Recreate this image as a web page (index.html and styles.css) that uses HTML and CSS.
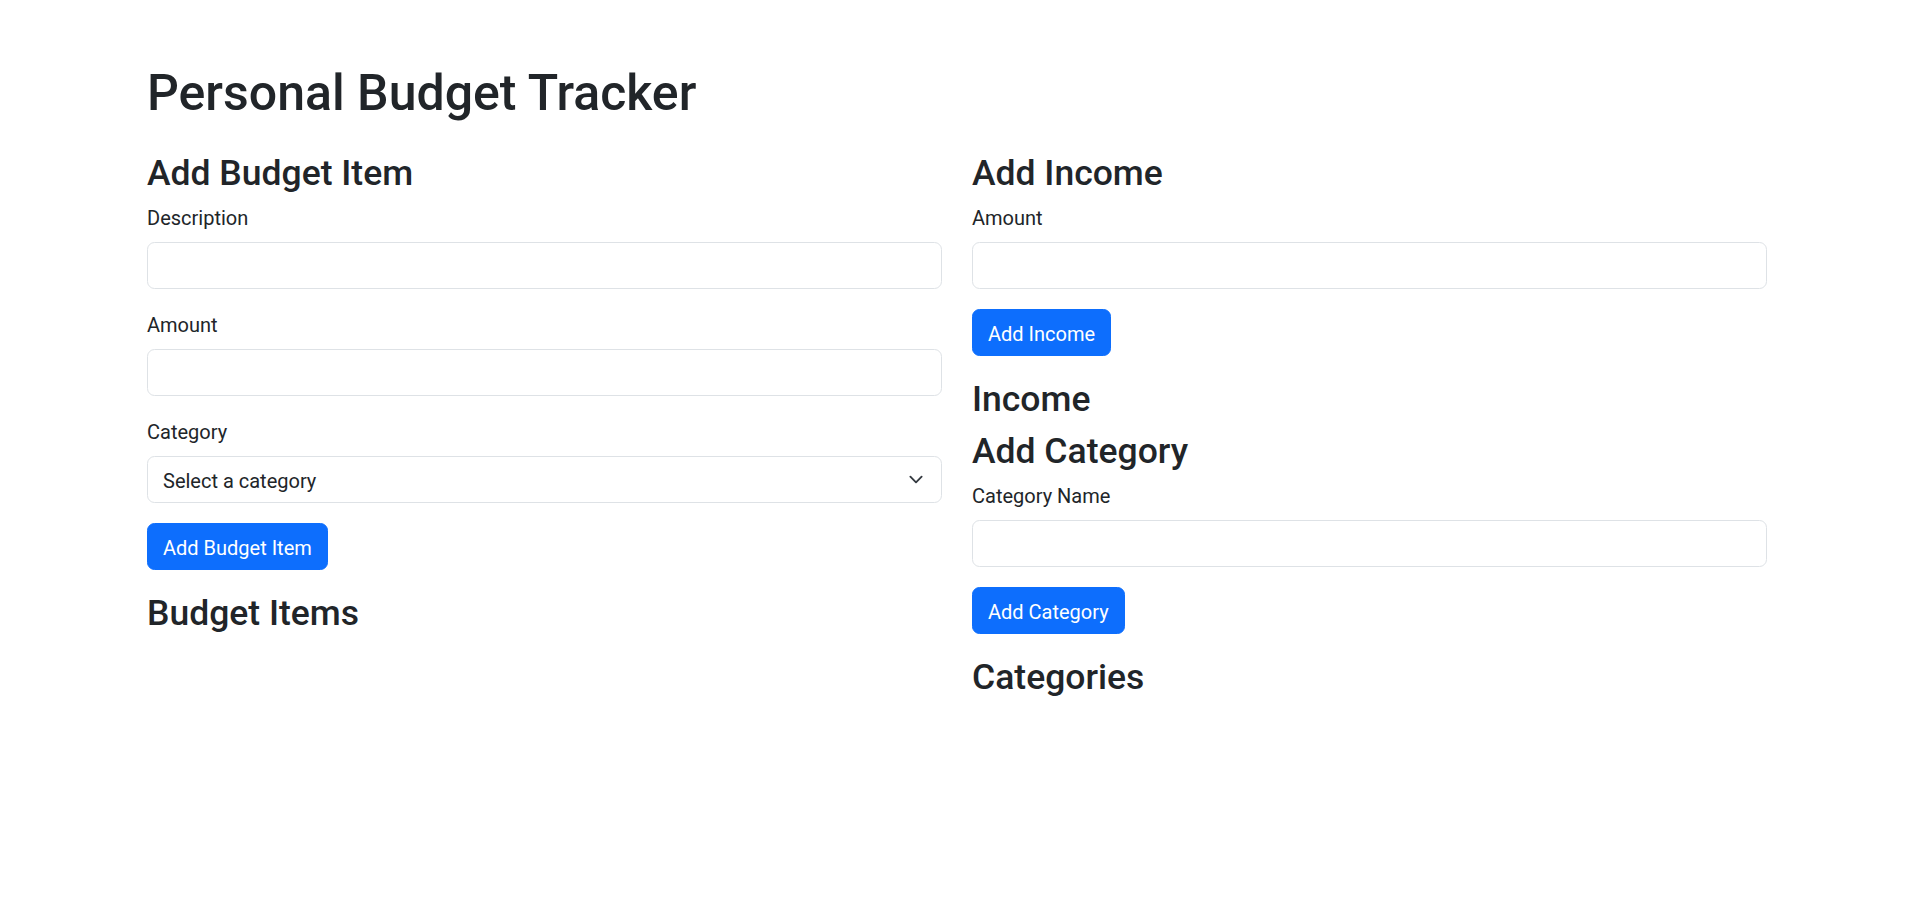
FILE: index.html
```html
<!DOCTYPE html>
<html lang="en">
<head>
<meta charset="utf-8">
<title>Personal Budget Tracker</title>
<link rel="stylesheet" href="styles.css">
</head>
<body>
<div class="container">
  <h1 class="title">Personal Budget Tracker</h1>
  <div class="columns">
    <section class="column">
      <h3 class="heading">Add Budget Item</h3>
      <form class="form">
        <div class="field">
          <label class="label" for="description">Description</label>
          <input class="control" id="description" type="text">
        </div>
        <div class="field">
          <label class="label" for="amount">Amount</label>
          <input class="control" id="amount" type="number">
        </div>
        <div class="field">
          <label class="label" for="category">Category</label>
          <div class="select-wrap">
            <select class="control select" id="category">
              <option value="">Select a category</option>
            </select>
            <svg class="chevron" width="20" height="15" viewBox="0 0 16 16" aria-hidden="true"><path d="m2 5 6 6 6-6" fill="none" stroke="#343a40" stroke-width="2" stroke-linecap="round" stroke-linejoin="round"/></svg>
          </div>
        </div>
        <button class="btn" type="button">Add Budget Item</button>
      </form>
      <h3 class="heading">Budget Items</h3>
      <ul class="list"></ul>
    </section>
    <section class="column">
      <h3 class="heading">Add Income</h3>
      <form class="form">
        <div class="field">
          <label class="label" for="income-amount">Amount</label>
          <input class="control" id="income-amount" type="number">
        </div>
        <button class="btn" type="button">Add Income</button>
      </form>
      <h3 class="heading">Income</h3>
      <div class="list"></div>
      <h3 class="heading">Add Category</h3>
      <form class="form">
        <div class="field">
          <label class="label" for="category-name">Category Name</label>
          <input class="control" id="category-name" type="text">
        </div>
        <button class="btn" type="button">Add Category</button>
      </form>
      <h3 class="heading">Categories</h3>
      <ul class="list"></ul>
    </section>
  </div>
</div>
</body>
</html>
```
FILE: styles.css
```css
* { box-sizing: border-box; }

body {
  margin: 0;
  padding-right: 3px;
  background: #fff;
  color: #212529;
  font-family: Roboto, "Liberation Sans", sans-serif;
  font-size: 20px;
  line-height: 30px;
}

.container {
  width: 1650px;
  margin: 60px auto 0;
  padding: 0 15px;
}

.title {
  margin: 0 0 27px;
  padding-top: 3px;
  font-size: 50px;
  line-height: 60px;
  font-weight: 500;
}

.columns {
  display: grid;
  grid-template-columns: 1fr 1fr;
  column-gap: 30px;
}

.column { min-width: 0; }

.heading {
  margin: 0 0 8px;
  padding-top: 2px;
  font-size: 35.5px;
  line-height: 42px;
  font-weight: 500;
}

.form { margin: 0 0 20px; }

.field { margin-bottom: 20px; }

.label {
  display: inline-block;
  margin-bottom: 9px;
  padding-top: 1px;
}

.control {
  display: block;
  width: 100%;
  margin: 0;
  padding: 8.5px 15px 6.5px;
  font: inherit;
  line-height: 30px;
  color: #212529;
  background: #fff;
  border: 1px solid #dee2e6;
  border-radius: 7.5px;
  outline: none;
  appearance: none;
  -webkit-appearance: none;
}

.control::-webkit-outer-spin-button,
.control::-webkit-inner-spin-button { -webkit-appearance: none; margin: 0; }

.select-wrap { position: relative; }

.select { padding-right: 45px; }

.chevron {
  position: absolute;
  right: 16px;
  top: 16px;
  pointer-events: none;
}

.btn {
  display: inline-block;
  margin: 0;
  padding: 8.5px 15px 6.5px;
  font: inherit;
  line-height: 30px;
  color: #fff;
  background: #0d6efd;
  border: 1px solid #0d6efd;
  border-radius: 7.5px;
  cursor: pointer;
}

.list {
  margin: 0;
  padding: 0;
  list-style: none;
}
```
